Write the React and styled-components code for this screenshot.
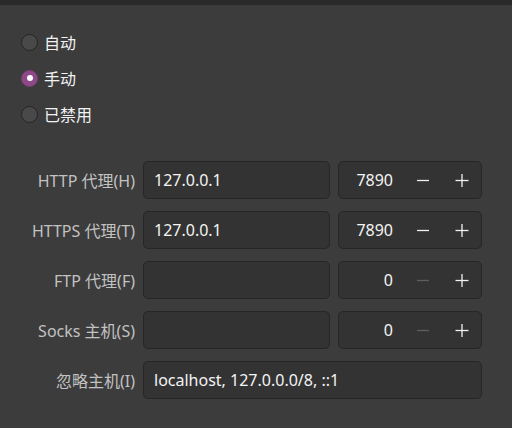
import React from "react";
import styled, { createGlobalStyle } from "styled-components";

const GlobalStyle = createGlobalStyle`
  html, body {
    margin: 0;
    padding: 0;
    background: #3c3c3c;
  }
  body {
    font-family: "Noto Sans", "Noto Sans CJK SC", sans-serif;
    color: #f2f2f2;
  }
`;

const Window = styled.div`
  width: 512px;
  height: 428px;
  background: #3c3c3c;
  overflow: hidden;
`;

const TopBar = styled.div`
  height: 5px;
  background: #2a2a2a;
`;

const RadioList = styled.div`
  display: flex;
  flex-direction: column;
  padding: 19px 0 0 21px;
`;

const RadioRow = styled.label`
  height: 36px;
  display: flex;
  align-items: center;
  gap: 6px;
  font-size: 16px;
  color: #f2f2f2;
`;

const Circle = styled.span`
  width: 17px;
  height: 17px;
  box-sizing: border-box;
  border-radius: 50%;
  display: flex;
  align-items: center;
  justify-content: center;
  background: ${(p) => (p.checked ? "#8e4a88" : "#494949")};
  border: 1px solid ${(p) => (p.checked ? "#7b3d76" : "#242424")};

  &::after {
    content: "";
    display: ${(p) => (p.checked ? "block" : "none")};
    width: 6px;
    height: 6px;
    border-radius: 50%;
    background: #ffffff;
  }
`;

const Form = styled.div`
  display: grid;
  grid-template-columns: 135px 187px 144px;
  grid-auto-rows: 38px;
  column-gap: 8px;
  row-gap: 12px;
  margin-top: 29px;
`;

const Label = styled.div`
  display: flex;
  align-items: center;
  justify-content: flex-end;
  font-size: 16px;
  color: #c2c2c2;
  white-space: nowrap;
`;

const Field = styled.div`
  grid-column: ${(p) => (p.wide ? "span 2" : "auto")};
  box-sizing: border-box;
  display: flex;
  align-items: center;
  background: #333333;
  border: 1px solid #262626;
  border-radius: 5px;
  padding: 0 10px;
  font-size: 16px;
  color: #f4f4f4;
  white-space: nowrap;
`;

const Spin = styled.div`
  box-sizing: border-box;
  display: flex;
  align-items: stretch;
  background: #333333;
  border: 1px solid #262626;
  border-radius: 5px;
  font-size: 16px;
  color: #f4f4f4;
`;

const SpinValue = styled.div`
  flex: 1;
  display: flex;
  align-items: center;
  justify-content: flex-end;
  padding-right: 10px;
`;

const SpinButton = styled.div`
  width: 39px;
  display: flex;
  align-items: center;
  justify-content: center;
  color: ${(p) => (p.disabled ? "#5e5e5e" : "#f2f2f2")};
`;

const Minus = () => (
  <svg width="14" height="14" viewBox="0 0 14 14">
    <line x1="1" y1="7.5" x2="13" y2="7.5" stroke="currentColor" strokeWidth="1.3" />
  </svg>
);

const Plus = () => (
  <svg width="14" height="14" viewBox="0 0 14 14">
    <line x1="0.5" y1="7.5" x2="13.5" y2="7.5" stroke="currentColor" strokeWidth="1.3" />
    <line x1="7" y1="1" x2="7" y2="14" stroke="currentColor" strokeWidth="1.3" />
  </svg>
);

const modes = [
  { text: "自动", checked: false },
  { text: "手动", checked: true },
  { text: "已禁用", checked: false },
];

const proxies = [
  { label: "HTTP 代理(H)", host: "127.0.0.1", port: 7890 },
  { label: "HTTPS 代理(T)", host: "127.0.0.1", port: 7890 },
  { label: "FTP 代理(F)", host: "", port: 0 },
  { label: "Socks 主机(S)", host: "", port: 0 },
];

const App = () => (
  <Window>
    <GlobalStyle />
    <TopBar />
    <RadioList>
      {modes.map((m) => (
        <RadioRow key={m.text}>
          <Circle checked={m.checked} />
          {m.text}
        </RadioRow>
      ))}
    </RadioList>
    <Form>
      {proxies.map((p) => (
        <React.Fragment key={p.label}>
          <Label>{p.label}</Label>
          <Field>{p.host}</Field>
          <Spin>
            <SpinValue>{p.port}</SpinValue>
            <SpinButton disabled={p.port === 0}>
              <Minus />
            </SpinButton>
            <SpinButton>
              <Plus />
            </SpinButton>
          </Spin>
        </React.Fragment>
      ))}
      <Label>忽略主机(I)</Label>
      <Field wide>localhost, 127.0.0.0/8, ::1</Field>
    </Form>
  </Window>
);

export default App;
